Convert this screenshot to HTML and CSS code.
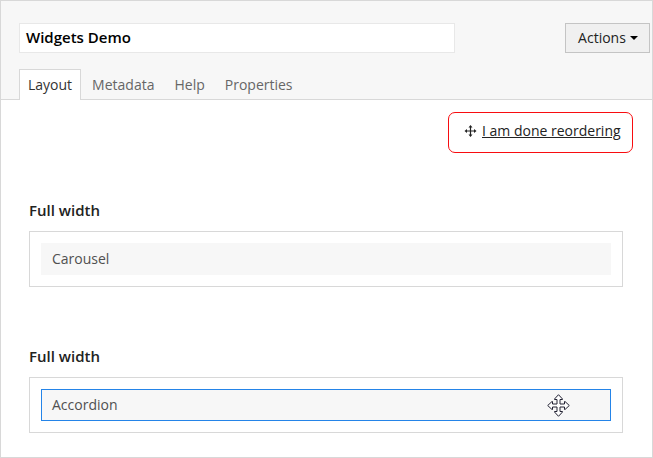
FILE: index.html
```html
<!DOCTYPE html>
<html lang="en"><head><meta charset="utf-8"><title>Widgets Demo</title><link rel="stylesheet" href="styles.css"></head>
<body>
<div class="page">
<header class="head">
<div class="bar"><div class="title">Widgets Demo</div><button class="actions">Actions<span class="caret"></span></button></div>
<nav class="tabs"><a class="tab active">Layout</a><a class="tab">Metadata</a><a class="tab">Help</a><a class="tab">Properties</a></nav>
</header>
<main class="main">
<div class="reorder"><svg class="move" viewBox="0 0 12 12"><path d="M6 0l2 2.500H6.600v2.900h2.900V4L12 6 9.500 8V6.600H6.600v2.900H8L6 12 4 9.500h1.400V6.600H2.500V8L0 6l2.500-2v1.400h2.900V2.500H4z"/></svg><a class="done">I am done reordering</a></div>
<section class="section"><h2 class="heading">Full width</h2><div class="zone"><div class="widget">Carousel</div></div></section>
<section class="section"><h2 class="heading">Full width</h2><div class="zone"><div class="widget selected">Accordion
<svg class="cursor" viewBox="0 0 23 23"><path d="M11.500 .7l4 4.300v.5h-2.500v4.500h4.500V7.500h.5l4.300 4-4.300 4h-.5V13H13v4.500h2.500v.5l-4 4.300-4-4.300v-.5H10V13H5.500v2.500H5l-4.300-4 4.300-4h.5V10H10V5.500H7.500V5z"/></svg></div></div></section>
</main>
</div>
</body></html>
```
FILE: styles.css
```css
*{box-sizing:border-box}
body{margin:0;font:14px/20px "Open Sans",sans-serif;color:#505050;background:#fff}
.page{height:458px;border:1px solid #d8d8d8}
.head{height:99px;background:#f7f7f7;border-bottom:1px solid #d8d8d8;padding:22px 2px 0 18px}
.bar{display:flex;justify-content:space-between}
.title{width:436px;height:30px;border:1px solid #e8e8e8;background:#fff;padding:3px 6px;font-size:15px;font-weight:600;color:#000}
.actions{width:85px;height:30px;border:1px solid #c4c4c4;background:#f0f0f0;color:#222;font:14px/20px "Open Sans",sans-serif;padding:0 0 0 1px;display:flex;align-items:center;justify-content:center;gap:4px}
.caret{border:4px solid transparent;border-top-color:#000;border-bottom:0}
.tabs{display:flex;margin-top:16px}
.tab{height:31px;padding:5px 8px 0;border:1px solid transparent;border-bottom:0;color:#666;margin-right:2px}
.active{background:#fff;border-color:#d8d8d8;color:#333}
.main{padding:12px 29px 0 28px}
.reorder{width:185px;height:41px;margin-left:auto;margin-right:-10px;border:1px solid #f80c10;border-radius:7px;display:flex;padding:8px 0 0 15px}
.move{width:13px;height:12px;margin:4px 5px 0 0;fill:#222}
.done{text-decoration:underline;color:#222}
.section{margin-top:47px}
.section + .section{margin-top:59px}
.heading{margin:0 0 11px;font-size:15px;line-height:20px;font-weight:600;color:#222}
.zone{height:56px;border:1px solid #d8d8d8;padding:11px}
.widget{height:32px;background:#f7f7f7;padding:6px 11px;position:relative}
.selected{border:1px solid #2484e8;padding:5px 10px}
.cursor{position:absolute;left:505px;top:4px;width:23px;height:23px;fill:#fff;stroke:#223}
```
